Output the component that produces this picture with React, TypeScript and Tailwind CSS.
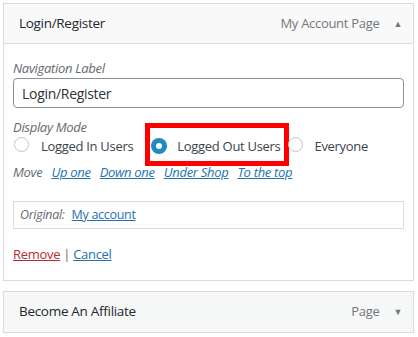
import React from "react";

const font = { fontFamily: '"Open Sans", "Noto Sans", Arial, sans-serif' };

function Radio({ checked }: { checked?: boolean }) {
  if (checked) {
    return (
      <span className="inline-flex h-[16px] w-[16px] shrink-0 items-center justify-center rounded-full bg-[#1e8cbe]">
        <span className="h-[6px] w-[6px] rounded-full bg-white" />
      </span>
    );
  }
  return <span className="inline-block h-[15px] w-[15px] shrink-0 rounded-full border-[1.5px] border-[#c3c4c7] bg-white" />;
}

export default function App() {
  return (
    <div className="h-[337px] w-[418px] bg-white pt-[3px] pl-[3px] pr-[4px] tracking-[-0.3px] text-[#32373c]" style={font}>
      <div className="border border-[#dcdcde]">
        <div className="flex h-[40px] items-center border-b border-[#dcdcde] bg-[#f9f9f9] pl-[15px] pr-[10px]">
          <span className="text-[13.5px] font-medium text-[#23282d]">Login/Register</span>
          <span className="ml-auto text-[13px] text-[#72777c]">My Account Page</span>
          <span className="ml-[14px] mr-[1px] text-[9px] text-[#72777c]">▲</span>
        </div>
        <div className="px-[9px] pb-[15px] pt-[15px]">
          <div className="text-[13px] italic leading-[18px] text-[#646970]">Navigation Label</div>
          <div className="mt-[1px] flex h-[30px] items-center rounded-[4px] border border-[#8c8f94] px-[8px] text-[14px] text-[#2c3338]">
            Login/Register
          </div>
          <div className="mt-[10px] text-[13px] italic leading-[18px] text-[#646970]">Display Mode</div>
          <div className="-mt-[2px] flex h-[24px] items-center text-[13px] leading-[18px] text-[#3c434a]">
            <span className="ml-[1px]"><Radio /></span>
            <span className="ml-[12px]">Logged In Users</span>
            <span className="relative ml-[18px] flex items-center">
              <span className="pointer-events-none absolute -left-[6px] -right-[9px] -top-[14px] -bottom-[11px] border-[5px] border-[#ff0000]" />
              <Radio checked />
              <span className="ml-[10px]">Logged Out Users</span>
            </span>
            <span className="relative ml-[8px]"><Radio /></span>
            <span className="ml-[11px]">Everyone</span>
          </div>
          <div className="mt-[5px] flex items-center gap-[9px] text-[13px] italic leading-[18px]">
            <span className="text-[#646970]">Move</span>
            <a className="text-[#2271b1] underline">Up one</a>
            <a className="text-[#2271b1] underline">Down one</a>
            <a className="text-[#2271b1] underline">Under Shop</a>
            <a className="text-[#2271b1] underline">To the top</a>
          </div>
          <div className="mt-[20px] flex h-[28px] items-center border border-[#dcdcde] px-[6px] text-[12.5px]">
            <span className="italic text-[#646970]">Original:</span>
            <a className="ml-[7px] text-[#2271b1] underline">My account</a>
          </div>
          <div className="mt-[16px] text-[13px]">
            <a className="text-[#b32d2e] underline">Remove</a>
            <span className="text-[#646970]"> | </span>
            <a className="text-[#2271b1] underline">Cancel</a>
          </div>
        </div>
      </div>
      <div className="mt-[10px] flex h-[42px] items-center border border-[#dcdcde] bg-[#f6f7f7] pl-[15px] pr-[10px]">
        <span className="text-[13.5px] font-medium text-[#23282d]">Become An Affiliate</span>
        <span className="ml-auto text-[13px] text-[#72777c]">Page</span>
        <span className="ml-[14px] mr-[1px] text-[9px] text-[#72777c]">▼</span>
      </div>
    </div>
  );
}
